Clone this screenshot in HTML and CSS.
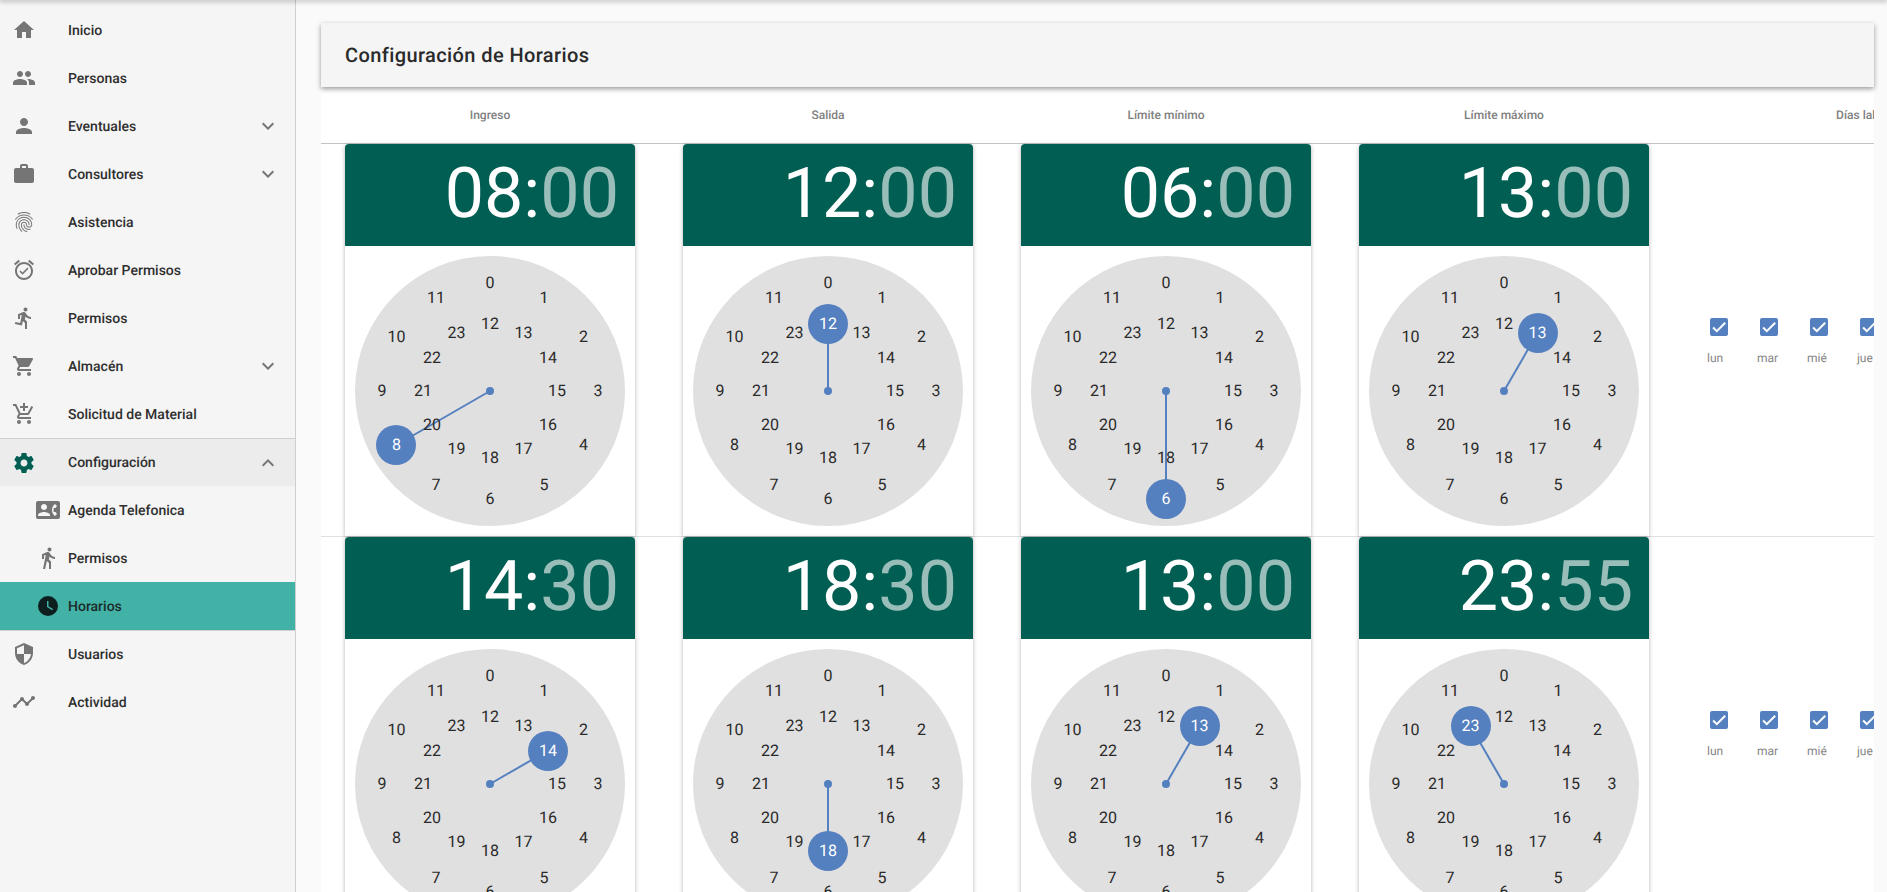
FILE: index.html
```html
<!DOCTYPE html>
<html lang="es">
<head>
  <meta charset="UTF-8" />
  <title>Configuración de Horarios</title>
  <link rel="stylesheet" href="styles.css">
</head>
<body>
  <div class="topbar"></div>
  <div class="layout">
    <aside class="sidebar">
      <a class="nav-item"><svg class="nav-icon" viewBox="0 0 24 24"><path d="M10 20v-6h4v6h5v-8h3L12 3 2 12h3v8z"/></svg><span>Inicio</span></a>
      <a class="nav-item"><svg class="nav-icon" viewBox="0 0 24 24"><path d="M16 11c1.66 0 2.99-1.34 2.99-3S17.66 5 16 5c-1.66 0-3 1.34-3 3s1.34 3 3 3zm-8 0c1.66 0 2.99-1.34 2.99-3S9.66 5 8 5C6.34 5 5 6.34 5 8s1.34 3 3 3zm0 2c-2.33 0-7 1.17-7 3.5V19h14v-2.5c0-2.33-4.67-3.5-7-3.5zm8 0c-.29 0-.62.02-.97.05 1.16.84 1.97 1.97 1.97 3.45V19h6v-2.5c0-2.33-4.67-3.5-7-3.5z"/></svg><span>Personas</span></a>
      <a class="nav-item"><svg class="nav-icon" viewBox="0 0 24 24"><path d="M12 12c2.21 0 4-1.79 4-4s-1.79-4-4-4-4 1.79-4 4 1.79 4 4 4zm0 2c-2.67 0-8 1.34-8 4v2h16v-2c0-2.66-5.33-4-8-4z"/></svg><span>Eventuales</span><svg class="nav-arrow" viewBox="0 0 24 24"><path d="M16.59 8.59L12 13.17 7.41 8.59 6 10l6 6 6-6z"/></svg></a>
      <a class="nav-item"><svg class="nav-icon" viewBox="0 0 24 24"><path d="M20 6h-4V4c0-1.11-.89-2-2-2h-4c-1.11 0-2 .89-2 2v2H4c-1.11 0-1.99.89-1.99 2L2 19c0 1.11.89 2 2 2h16c1.11 0 2-.89 2-2V8c0-1.11-.89-2-2-2zm-6 0h-4V4h4v2z"/></svg><span>Consultores</span><svg class="nav-arrow" viewBox="0 0 24 24"><path d="M16.59 8.59L12 13.17 7.41 8.59 6 10l6 6 6-6z"/></svg></a>
      <a class="nav-item"><svg class="nav-icon" viewBox="0 0 24 24"><path d="M17.81 4.47c-.08 0-.16-.02-.23-.06C15.66 3.42 14 3 12.01 3c-1.98 0-3.86.47-5.57 1.41-.24.13-.54.04-.68-.2-.13-.24-.04-.55.2-.68C7.82 2.52 9.86 2 12.01 2c2.13 0 3.99.47 6.03 1.52.25.13.34.43.21.67-.09.18-.26.28-.44.28zM3.5 9.72c-.1 0-.2-.03-.29-.09-.23-.16-.28-.47-.12-.7.99-1.4 2.25-2.5 3.75-3.27C9.98 4.04 14 4.03 17.15 5.65c1.5.77 2.76 1.86 3.75 3.25.16.22.11.54-.12.7-.23.16-.54.11-.7-.12-.9-1.26-2.04-2.25-3.39-2.94-2.87-1.47-6.54-1.47-9.4.01-1.36.7-2.5 1.7-3.4 2.96-.08.14-.23.21-.39.21zm6.25 12.07c-.13 0-.26-.05-.35-.15-.87-.87-1.34-1.43-2.01-2.64-.69-1.23-1.05-2.73-1.05-4.34 0-2.97 2.54-5.39 5.66-5.39s5.66 2.42 5.66 5.39c0 .28-.22.5-.5.5s-.5-.22-.5-.5c0-2.42-2.09-4.39-4.66-4.39-2.57 0-4.66 1.97-4.66 4.39 0 1.44.32 2.77.93 3.85.64 1.15 1.08 1.64 1.85 2.42.19.2.19.51 0 .71-.11.1-.24.15-.37.15zm7.17-1.85c-1.19 0-2.24-.3-3.1-.89-1.49-1.01-2.38-2.65-2.38-4.39 0-.28.22-.5.5-.5s.5.22.5.5c0 1.41.72 2.74 1.94 3.56.71.48 1.54.71 2.54.71.24 0 .64-.03 1.04-.1.27-.05.53.13.58.41.05.27-.13.53-.41.58-.57.11-1.07.12-1.21.12zM14.91 22c-.04 0-.09-.01-.13-.02-1.59-.44-2.63-1.03-3.72-2.1-1.4-1.39-2.17-3.24-2.17-5.22 0-1.62 1.38-2.94 3.08-2.94 1.7 0 3.08 1.32 3.08 2.94 0 1.07.93 1.94 2.08 1.94s2.08-.87 2.08-1.94c0-3.77-3.25-6.83-7.25-6.83-2.84 0-5.44 1.58-6.61 4.03-.39.81-.59 1.76-.59 2.8 0 .78.07 2.01.67 3.61.1.26-.03.55-.29.64-.26.1-.55-.04-.64-.29-.49-1.31-.73-2.61-.73-3.96 0-1.2.23-2.29.68-3.24 1.33-2.79 4.28-4.6 7.51-4.6 4.55 0 8.25 3.51 8.25 7.83 0 1.62-1.38 2.94-3.08 2.94s-3.08-1.32-3.08-2.94c0-1.07-.93-1.94-2.08-1.94s-2.08.87-2.08 1.94c0 1.71.66 3.31 1.87 4.51.95.94 1.86 1.46 3.27 1.85.27.07.42.35.35.61-.05.23-.26.38-.47.38z"/></svg><span>Asistencia</span></a>
      <a class="nav-item"><svg class="nav-icon" viewBox="0 0 24 24"><path d="M22 5.72l-4.6-3.86-1.29 1.53 4.6 3.86L22 5.72zM7.88 3.39L6.6 1.86 2 5.71l1.29 1.53 4.59-3.85zM12 4c-4.97 0-9 4.03-9 9s4.02 9 9 9c4.97 0 9-4.03 9-9s-4.03-9-9-9zm0 16c-3.86 0-7-3.14-7-7s3.14-7 7-7 7 3.14 7 7-3.14 7-7 7zm-1.46-5.47L8.41 12.4l-1.06 1.06 3.18 3.18 6-6-1.06-1.06-4.93 4.95z"/></svg><span>Aprobar Permisos</span></a>
      <a class="nav-item"><svg class="nav-icon" viewBox="0 0 24 24"><path d="M13.49 5.48c1.1 0 2-.9 2-2s-.9-2-2-2-2 .9-2 2 .9 2 2 2zm-3.6 13.9l1-4.4 2.1 2v6h2v-7.5l-2.1-2 .6-3c1.3 1.5 3.3 2.5 5.5 2.5v-2c-1.9 0-3.5-1-4.3-2.4l-1-1.6c-.4-.6-1-1-1.7-1-.3 0-.5.1-.8.1l-5.2 2.2v4.7h2v-3.4l1.8-.7-1.6 8.1-4.9-1-.4 2 7 1.4z"/></svg><span>Permisos</span></a>
      <a class="nav-item"><svg class="nav-icon" viewBox="0 0 24 24"><path d="M7 18c-1.1 0-1.99.9-1.99 2S5.9 22 7 22s2-.9 2-2-.9-2-2-2zM1 2v2h2l3.6 7.59-1.35 2.45c-.16.28-.25.61-.25.96 0 1.1.9 2 2 2h12v-2H7.42c-.14 0-.25-.11-.25-.25l.03-.12.9-1.63h7.45c.75 0 1.41-.41 1.75-1.03l3.58-6.49c.08-.14.12-.31.12-.48 0-.55-.45-1-1-1H5.21l-.94-2H1zm16 16c-1.1 0-1.99.9-1.99 2s.89 2 1.99 2 2-.9 2-2-.9-2-2-2z"/></svg><span>Almacén</span><svg class="nav-arrow" viewBox="0 0 24 24"><path d="M16.59 8.59L12 13.17 7.41 8.59 6 10l6 6 6-6z"/></svg></a>
      <a class="nav-item"><svg class="nav-icon" viewBox="0 0 24 24"><path d="M11 9h2V6h3V4h-3V1h-2v3H8v2h3v3zm-4 9c-1.1 0-1.99.9-1.99 2S5.9 22 7 22s2-.9 2-2-.9-2-2-2zm10 0c-1.1 0-1.99.9-1.99 2s.89 2 1.99 2 2-.9 2-2-.9-2-2-2zm-9.83-3.25l.03-.12.9-1.63h7.45c.75 0 1.41-.41 1.75-1.03l3.86-7.01L19.42 4h-.01l-1.1 2-2.76 5H8.53l-.13-.27L6.16 6l-.95-2-.94-2H1v2h2l3.6 7.59-1.35 2.45c-.16.28-.25.61-.25.96 0 1.1.9 2 2 2h12v-2H7.42c-.13 0-.25-.11-.25-.25z"/></svg><span>Solicitud de Material</span></a>
      <div class="nav-group">
        <a class="nav-item open"><svg class="nav-icon" viewBox="0 0 24 24"><path d="M19.43 12.98c.04-.32.07-.64.07-.98s-.03-.66-.07-.98l2.11-1.65c.19-.15.24-.42.12-.64l-2-3.46c-.12-.22-.39-.3-.61-.22l-2.49 1c-.52-.4-1.08-.73-1.69-.98l-.38-2.65C14.46 2.18 14.25 2 14 2h-4c-.25 0-.46.18-.49.42l-.38 2.65c-.61.25-1.17.59-1.69.98l-2.49-1c-.23-.09-.49 0-.61.22l-2 3.46c-.13.22-.07.49.12.64l2.11 1.65c-.04.32-.07.65-.07.98s.03.66.07.98l-2.11 1.65c-.19.15-.24.42-.12.64l2 3.46c.12.22.39.3.61.22l2.49-1c.52.4 1.08.73 1.69.98l.38 2.65c.03.24.24.42.49.42h4c.25 0 .46-.18.49-.42l.38-2.65c.61-.25 1.17-.59 1.69-.98l2.49 1c.23.09.49 0 .61-.22l2-3.46c.12-.22.07-.49-.12-.64l-2.11-1.65zM12 15.5c-1.93 0-3.5-1.57-3.5-3.5s1.57-3.5 3.5-3.5 3.5 1.57 3.5 3.5-1.57 3.5-3.5 3.5z"/></svg><span>Configuración</span><svg class="nav-arrow" viewBox="0 0 24 24"><path d="M12 8l-6 6 1.41 1.41L12 10.83l4.59 4.58L18 14z"/></svg></a>
        <a class="nav-item sub"><svg class="nav-icon" viewBox="0 0 24 24"><path d="M22 3H2C.9 3 0 3.9 0 5v14c0 1.1.9 2 2 2h20c1.1 0 1.99-.9 1.99-2L24 5c0-1.1-.9-2-2-2zM8 6c1.66 0 3 1.34 3 3s-1.34 3-3 3-3-1.34-3-3 1.34-3 3-3zm6 12H2v-1c0-2 4-3.1 6-3.1s6 1.1 6 3.1v1zm3.85-4h1.64L21 16l-1.99 1.99c-1.31-.98-2.28-2.38-2.73-3.99-.18-.64-.28-1.31-.28-2s.1-1.36.28-2c.45-1.62 1.42-3.01 2.73-3.99L21 8l-1.51 2h-1.64c-.22.63-.35 1.3-.35 2s.13 1.37.35 2z"/></svg><span>Agenda Telefonica</span></a>
        <a class="nav-item sub"><svg class="nav-icon" viewBox="0 0 24 24"><path d="M13.5 5.5c1.1 0 2-.9 2-2s-.9-2-2-2-2 .9-2 2 .9 2 2 2zM9.8 8.9L7 23h2.1l1.8-8 2.1 2v6h2v-7.5l-2.1-2 .6-3C14.8 12 16.8 13 19 13v-2c-1.9 0-3.5-1-4.3-2.4l-1-1.6c-.4-.6-1-1-1.7-1-.3 0-.5.1-.8.1L6 8.3V13h2V9.6l1.8-.7z"/></svg><span>Permisos</span></a>
        <a class="nav-item sub active"><svg class="nav-icon" viewBox="0 0 24 24"><path d="M12 2a10 10 0 100 20 10 10 0 000-20zm4.2 14.2L11 13V7h1.5v5.2l4.5 2.7-.8 1.3z"/></svg><span>Horarios</span></a>
      </div>
      <a class="nav-item"><svg class="nav-icon" viewBox="0 0 24 24"><path d="M12 1L3 5v6c0 5.55 3.84 10.74 9 12 5.16-1.26 9-6.45 9-12V5l-9-4zm0 10.99h7c-.53 4.12-3.28 7.79-7 8.94V12H5V6.3l7-3.11v8.8z"/></svg><span>Usuarios</span></a>
      <a class="nav-item"><svg class="nav-icon" viewBox="0 0 24 24"><path d="M23 8c0 1.1-.9 2-2 2-.18 0-.35-.02-.51-.07l-3.56 3.55c.05.16.07.34.07.52 0 1.1-.9 2-2 2s-2-.9-2-2c0-.18.02-.36.07-.52l-2.55-2.55c-.16.05-.34.07-.52.07s-.36-.02-.52-.07l-4.55 4.56c.05.16.07.33.07.51 0 1.1-.9 2-2 2s-2-.9-2-2 .9-2 2-2c.18 0 .35.02.51.07l4.56-4.55C8.02 9.36 8 9.18 8 9c0-1.1.9-2 2-2s2 .9 2 2c0 .18-.02.36-.07.52l2.55 2.55c.16-.05.34-.07.52-.07s.36.02.52.07l3.55-3.56C19.02 8.35 19 8.18 19 8c0-1.1.9-2 2-2s2 .9 2 2z"/></svg><span>Actividad</span></a>
    </aside>

    <main class="content">
      <div class="page-title">Configuración de Horarios</div>
      <div class="table-wrap">
        <div class="table-row header-row">
          <div class="head-cell">Ingreso</div>
          <div class="head-cell">Salida</div>
          <div class="head-cell">Límite mínimo</div>
          <div class="head-cell">Límite máximo</div>
          <div class="head-cell days-cell">Días laborales</div>
        </div>
        <div id="rows"></div>
      </div>
    </main>
  </div>
  <script src="app.js"></script>
</body>
</html>
```

FILE: styles.css
```css
* {
  box-sizing: border-box;
}

html,
body {
  height: 100%;
}

body {
  margin: 0;
  overflow: hidden;
  font-family: Roboto, "Liberation Sans", sans-serif;
  text-rendering: geometricPrecision;
  background-color: #fafafa;
  color: #212121;
}

.topbar {
  position: relative;
  z-index: 5;
  height: 0;
  box-shadow: 0 0 5px 1px rgba(0, 0, 0, 0.45);
}

.layout {
  display: flex;
  height: 100%;
}

/* sidebar */
.sidebar {
  flex: 0 0 296px;
  padding-top: 6px;
  background-color: #f5f5f5;
  border-right: 1px solid #cfcfcf;
}

.nav-item {
  display: flex;
  align-items: center;
  height: 48px;
  padding: 0 15px 0 12px;
  font-size: 14px;
  font-weight: 500;
  color: #2e2e2e;
}

.nav-item span {
  flex: 1;
  padding-top: 1px;
}

.nav-icon {
  flex: none;
  width: 24px;
  height: 24px;
  margin-right: 32px;
  fill: #757575;
}

.nav-arrow {
  flex: none;
  width: 24px;
  height: 24px;
  fill: #757575;
}

.nav-group {
  border-top: 1px solid #d0d0d0;
  border-bottom: 1px solid #d0d0d0;
  margin-bottom: -1px;
}

.nav-item.open {
  height: 47px;
  background-color: #ececec;
}

.nav-item.open .nav-icon {
  fill: #005e52;
}

.nav-item.sub {
  padding-left: 36px;
}

.nav-item.sub .nav-icon {
  margin-right: 8px;
}

.nav-item.active {
  background-color: #42b1a6;
  color: #1c2b2a;
}

.nav-item.active .nav-icon {
  fill: #0c1f1e;
}

/* main */
.content {
  flex: 1;
  min-width: 0;
  padding: 23px 13px 0 25px;
}

.page-title {
  position: relative;
  z-index: 2;
  height: 64px;
  line-height: 64px;
  padding-left: 24px;
  font-size: 20px;
  font-weight: 500;
  letter-spacing: 0.4px;
  color: #2a2a2a;
  background-color: #f5f5f5;
  box-shadow: 0 2px 5px rgba(0, 0, 0, 0.4);
}

.table-wrap {
  overflow: hidden;
  background-color: #fff;
  height: 820px;
}

.table-row {
  display: flex;
  width: 1754px;
  border-bottom: 1px solid #e0e0e0;
}

.header-row {
  height: 57px;
  border-bottom-color: #c4c4c4;
}

.head-cell {
  flex: 0 0 338px;
  display: flex;
  align-items: center;
  justify-content: center;
  font-size: 12px;
  font-weight: 500;
  color: #808080;
}

.head-cell.days-cell {
  flex: 0 0 402px;
}

/* time picker */
.picker-cell {
  flex: 0 0 338px;
  padding: 0 24px;
}

.picker {
  width: 290px;
  background-color: #fff;
  border-radius: 4px 4px 0 0;
  box-shadow: 0 1px 4px rgba(0, 0, 0, 0.3);
}

.picker-time {
  height: 102px;
  padding-right: 16px;
  border-radius: 4px 4px 0 0;
  background-color: #005e52;
  color: #fff;
  font-size: 70px;
  line-height: 100px;
  text-align: right;
}

.picker-time .minutes {
  color: rgba(255, 255, 255, 0.6);
}

.picker-body {
  padding: 10px;
}

.dial {
  position: relative;
  width: 270px;
  height: 270px;
  border-radius: 50%;
  background-color: #e0e0e0;
}

.dial-dot {
  position: absolute;
  left: 131px;
  top: 131px;
  width: 8px;
  height: 8px;
  border-radius: 50%;
  background-color: #5580bf;
}

.dial-hand {
  position: absolute;
  left: 135px;
  top: 134px;
  height: 2px;
  background-color: #5580bf;
  transform-origin: 0 50%;
}

.dial-disc {
  position: absolute;
  width: 40px;
  height: 40px;
  margin: -20px 0 0 -20px;
  border-radius: 50%;
  background-color: #5580bf;
}

.dial-num {
  position: absolute;
  width: 30px;
  height: 20px;
  margin: -10px 0 0 -15px;
  font-size: 16px;
  line-height: 20px;
  text-align: center;
  color: #2a2a2a;
}

.dial-num.selected {
  color: #fff;
}

/* dias */
.days {
  flex: 0 0 402px;
  display: flex;
  align-items: center;
  padding: 3px 0 0 24px;
}

.day {
  flex: 0 0 50px;
  padding-left: 10px;
  font-size: 12px;
  color: #858585;
}

.day-box {
  width: 18px;
  height: 18px;
  margin: 0 0 15px 3px;
  border-radius: 2px;
  background-color: #5580bf;
}

.day-box svg {
  display: block;
  width: 18px;
  height: 18px;
  fill: none;
  stroke: #fff;
  stroke-width: 2;
}
```

FILE: app.js
```js
// filas de horarios: [hora, minutos] por columna
var rows = [
  [["08", "00"], ["12", "00"], ["06", "00"], ["13", "00"]],
  [["14", "30"], ["18", "30"], ["13", "00"], ["23", "55"]]
];
var days = ["lun", "mar", "mié", "jue", "vie", "sáb", "dom"];
var OUTER = 108;
var INNER = 67;

function dialPosition(hour) {
  var angle = (hour % 12) * Math.PI / 6;
  var radius = hour >= 12 ? INNER : OUTER;
  return {
    radius: radius,
    angle: angle,
    x: 135 + radius * Math.sin(angle),
    y: 135 - radius * Math.cos(angle)
  };
}

function buildDial(selected) {
  var pos = dialPosition(selected);
  var deg = pos.angle * 180 / Math.PI - 90;
  var html = '<div class="dial"><div class="dial-dot"></div>';
  html += '<div class="dial-hand" style="width:' + pos.radius + 'px;transform:rotate(' + deg + 'deg)"></div>';
  html += '<div class="dial-disc" style="left:' + pos.x + 'px;top:' + pos.y + 'px"></div>';
  for (var h = 0; h < 24; h++) {
    var p = dialPosition(h);
    var cls = h === selected ? "dial-num selected" : "dial-num";
    html += '<span class="' + cls + '" style="left:' + p.x.toFixed(1) + 'px;top:' + p.y.toFixed(1) + 'px">' + h + "</span>";
  }
  return html + "</div>";
}

function buildPicker(time) {
  return '<div class="picker-cell"><div class="picker">' +
    '<div class="picker-time">' + time[0] + ':<span class="minutes">' + time[1] + "</span></div>" +
    '<div class="picker-body">' + buildDial(parseInt(time[0], 10)) + "</div></div></div>";
}

function buildDays() {
  var html = '<div class="days">';
  days.forEach(function (d) {
    html += '<div class="day"><div class="day-box"><svg viewBox="0 0 18 18"><path d="M3.1 9.5l3.7 3.7 8.4-8.5"/></svg></div>' + d + "</div>";
  });
  return html + "</div>";
}

document.getElementById("rows").innerHTML = rows.map(function (row) {
  return '<div class="table-row">' + row.map(buildPicker).join("") + buildDays() + "</div>";
}).join("");
```
